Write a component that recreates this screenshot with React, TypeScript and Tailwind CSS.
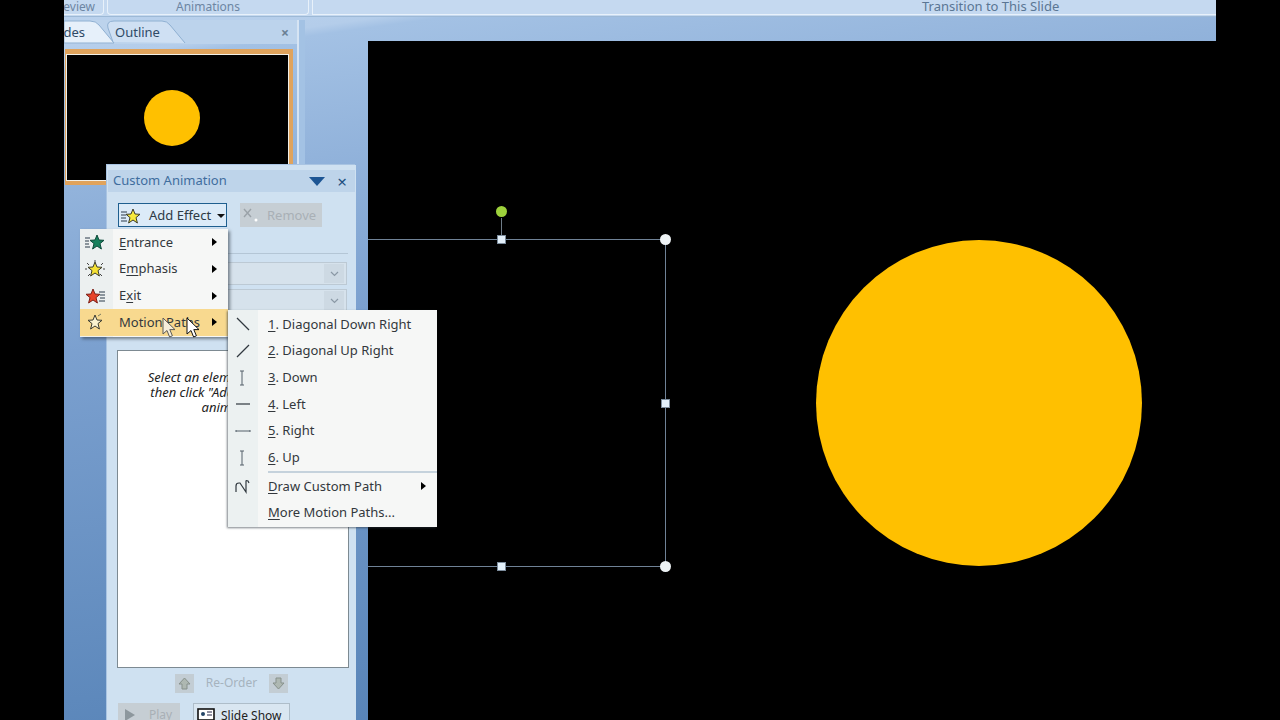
import type { ReactNode } from "react";

const starPoints = "8,1 10,6 15,6.3 11,9.6 12.4,15 8,12 3.6,15 5,9.6 1,6.3 6,6";

function Star({ fill, stroke = "#3a3a2a" }: { fill: string; stroke?: string }) {
  return <polygon points={starPoints} fill={fill} stroke={stroke} strokeWidth="1" strokeLinejoin="round" />;
}

function AddEffectIcon() {
  return (
    <svg width="22" height="18" viewBox="0 0 22 18">
      <path d="M1 5h6M1 8h5M1 11h5M1 14h6" stroke="#2b3b4b" strokeWidth="1.2" />
      <g transform="translate(5 1)">
        <Star fill="#f7ea3c" />
      </g>
    </svg>
  );
}

function EntranceIcon() {
  return (
    <svg width="22" height="18" viewBox="0 0 22 18">
      <path d="M1 5h5M1 8h4M1 11h4M1 14h5" stroke="#2b3b4b" strokeWidth="1.2" />
      <g transform="translate(5 1)">
        <Star fill="#16805c" stroke="#0d4a3a" />
      </g>
    </svg>
  );
}

function EmphasisIcon() {
  return (
    <svg width="22" height="18" viewBox="0 0 22 18">
      <path d="M11 0v2M3 3l2 2M19 3l-2 2M1 9h2M21 9h-2M4 16l2-2M18 16l-2-2" stroke="#444" strokeWidth="1" />
      <g transform="translate(3 1)">
        <Star fill="#f5e133" />
      </g>
    </svg>
  );
}

function ExitIcon() {
  return (
    <svg width="22" height="18" viewBox="0 0 22 18">
      <path d="M15 5h6M16 8h5M16 11h5M15 14h6" stroke="#2b3b4b" strokeWidth="1.2" />
      <g transform="translate(1 1)">
        <Star fill="#e8442a" stroke="#7a2018" />
      </g>
    </svg>
  );
}

function MotionIcon() {
  return (
    <svg width="22" height="18" viewBox="0 0 22 18">
      <path d="M14 3l3-2" stroke="#7a7a60" strokeWidth="1" />
      <g transform="translate(3 1)">
        <Star fill="#fbf3d0" stroke="#3b3b30" />
      </g>
    </svg>
  );
}

function PathIcon({ d, dots }: { d: string; dots?: boolean }) {
  return (
    <svg width="22" height="22" viewBox="0 0 22 22">
      <path d={d} fill="none" stroke={dots ? "#55606a" : "#30383f"} strokeWidth={dots ? 1 : 1.2} />
    </svg>
  );
}

function Arrow() {
  return <span className="border-y-[4px] border-l-[5px] border-y-transparent border-l-black" />;
}

function Key({ children }: { children: ReactNode }) {
  return <span className="underline underline-offset-2">{children}</span>;
}

function MenuRow({
  icon,
  label,
  arrow,
  active,
  col,
}: {
  icon?: ReactNode;
  label: ReactNode;
  arrow?: boolean;
  active?: boolean;
  col: string;
}) {
  return (
    <div className={`flex h-[26.7px] items-center pr-[11px] ${active ? "bg-[#f8d98f]" : ""}`}>
      <div className={`flex shrink-0 justify-center ${col}`}>{icon}</div>
      <div className="flex-1 whitespace-nowrap text-[13px] text-[#33383d]">{label}</div>
      {arrow && <Arrow />}
    </div>
  );
}

function Cursor({ ghost }: { ghost?: boolean }) {
  return (
    <svg width="14" height="22" viewBox="0 0 14 22">
      <path
        d="M1 1v16l4-3.5 2.6 6.5 2.8-1.2-2.6-6.2H13z"
        fill={ghost ? "#f6eedb" : "#fff"}
        stroke={ghost ? "#5a5a58" : "#111"}
        strokeWidth="1"
      />
    </svg>
  );
}

function Combo() {
  return (
    <div className="flex h-[23px] items-center justify-end border border-[#bcc9d4] bg-[#d6e2ec] pr-[2px]">
      <div className="flex h-[19px] w-[20px] items-center justify-center bg-[#cdd9e3]">
        <svg width="9" height="6" viewBox="0 0 9 6">
          <path d="M1 1l3.5 3.5L8 1" fill="none" stroke="#8a98a5" strokeWidth="1.2" />
        </svg>
      </div>
    </div>
  );
}

function TaskPane() {
  return (
    <div className="absolute left-[43px] top-[165px] flex h-[570px] w-[249px] flex-col bg-[#cfe1f1] shadow-[-1px_-1px_0_#a9c4e2]">
      <div className="mx-[1px] mt-[5px] flex h-[22px] items-center bg-[#bed4ea] pl-[5px] pr-[8px]">
        <span className="flex-1 text-[13px] text-[#3f6d9e]">Custom Animation</span>
        <span className="mr-[12px] border-x-[8px] border-t-[9px] border-x-transparent border-t-[#1d5594]" />
        <span className="text-[17px] leading-none text-[#1f4f80]">×</span>
      </div>
      <div className="mt-[11px] flex gap-[13px] pl-[11px]">
        <div className="flex h-[24px] w-[109px] items-center whitespace-nowrap border border-[#1f5f8f] bg-[#dcebf8] pl-[1px] pt-[1px] text-[13px] text-[#2e3a44]">
          <AddEffectIcon />
          <span className="ml-[7px]">Add Effect</span>
          <span className="ml-[6px] border-x-[4px] border-t-[4px] border-x-transparent border-t-[#111]" />
        </div>
        <div className="flex h-[24px] w-[82px] items-center gap-[7px] whitespace-nowrap bg-[#c6ced4] pl-[2px] pt-[1px] text-[13px] text-[#a9b0b6]">
          <svg width="18" height="18" viewBox="0 0 18 18">
            <path d="M2 2l7 8M9 2l-7 8" stroke="#9aa2a8" strokeWidth="1.4" />
            <circle cx="14" cy="13" r="1.5" fill="#fff" />
          </svg>
          <span>Remove</span>
        </div>
      </div>
      <div className="ml-[11px] mr-[8px] mt-[26px] h-[1px] bg-[#b4c6d6]" />
      <div className="ml-[11px] mr-[9px] mt-[8px] flex flex-col gap-[4px]">
        <Combo />
        <Combo />
      </div>
      <div className="ml-[10px] mr-[7px] mt-[38px] h-[318px] border border-[#7d8a92] bg-white pt-[19px] text-center text-[13px] italic leading-[15px] text-[#222]">
        Select an element of the slide,
        <br />
        then click "Add Effect" to add
        <br />
        animation.
      </div>
      <div className="mt-[5px] flex h-[20px] items-center justify-center gap-[12px] text-[12px] text-[#a6b3be]">
        <div className="flex h-[19px] w-[19px] items-center justify-center bg-[#c3cdd4]">
          <svg width="13" height="13" viewBox="0 0 13 13">
            <path d="M6.5 1L12 7H9v5H4V7H1z" fill="#aeb8b2" stroke="#87918c" />
          </svg>
        </div>
        <span>Re-Order</span>
        <div className="flex h-[19px] w-[19px] items-center justify-center bg-[#c3cdd4]">
          <svg width="13" height="13" viewBox="0 0 13 13">
            <path d="M6.5 12L12 6H9V1H4v5H1z" fill="#aeb8b2" stroke="#87918c" />
          </svg>
        </div>
      </div>
      <div className="mt-[10px] flex gap-[13px] pl-[11px] text-[12px]">
        <div className="flex h-[24px] w-[62px] items-center gap-[14px] bg-[#c6ced4] pl-[7px] text-[#a9b0b6]">
          <span className="border-y-[6px] border-l-[10px] border-y-transparent border-l-[#8d979d]" />
          <span>Play</span>
        </div>
        <div className="flex h-[24px] w-[97px] items-center gap-[6px] whitespace-nowrap border border-[#aebdc9] bg-[#d9e6f1] pl-[3px] pt-[2px] text-[#222]">
          <svg width="18" height="16" viewBox="0 0 18 16">
            <rect x="1" y="1" width="16" height="11" fill="#fff" stroke="#111" strokeWidth="1.6" />
            <path d="M10 4h5M10 7h5" stroke="#224" />
            <circle cx="6" cy="6" r="2" fill="#246" />
          </svg>
          <span>Slide Show</span>
        </div>
      </div>
    </div>
  );
}

function EffectMenu() {
  const col = "w-[30px] mr-[9px]";
  return (
    <div className="absolute left-[16px] top-[229px] w-[148px] bg-[#f6f7f6] bg-[linear-gradient(90deg,#ecf0f0_33px,transparent_33px)] pb-[1px] shadow-[2px_2px_3px_rgba(40,50,60,0.55)]">
      <MenuRow col={col} icon={<EntranceIcon />} label={<><Key>E</Key>ntrance</>} arrow />
      <MenuRow col={col} icon={<EmphasisIcon />} label={<>E<Key>m</Key>phasis</>} arrow />
      <MenuRow col={col} icon={<ExitIcon />} label={<>E<Key>x</Key>it</>} arrow />
      <MenuRow col={col} icon={<MotionIcon />} label="Motion Paths" arrow active />
    </div>
  );
}

function PathsMenu() {
  const col = "w-[30px] mr-[10px]";
  return (
    <div className="absolute left-[164px] top-[310px] w-[209px] bg-[#f6f7f6] bg-[linear-gradient(90deg,#ecf1f1_30px,transparent_30px)] pt-[1px] shadow-[-1px_1px_2px_rgba(40,50,60,0.6)]">
      <MenuRow col={col} icon={<PathIcon d="M5 5l12 12" />} label={<><Key>1</Key>. Diagonal Down Right</>} />
      <MenuRow col={col} icon={<PathIcon d="M5 17L17 5" />} label={<><Key>2</Key>. Diagonal Up Right</>} />
      <MenuRow col={col} icon={<PathIcon dots d="M10 4v14M8 4h4M8 18h4" />} label={<><Key>3</Key>. Down</>} />
      <MenuRow col={col} icon={<PathIcon d="M4 11h14" />} label={<><Key>4</Key>. Left</>} />
      <MenuRow col={col} icon={<PathIcon dots d="M4 11h14M4 10v2M18 10v2" />} label={<><Key>5</Key>. Right</>} />
      <MenuRow col={col} icon={<PathIcon dots d="M10 4v14M8 4h4M8 18h4" />} label={<><Key>6</Key>. Up</>} />
      <div className="ml-[40px] h-[2px] bg-[#c5d2dc]" />
      <MenuRow col={col} icon={<PathIcon d="M4 17V11q0-3 3-3h1l6 9V6q0-1 2 0l1 2" />} label={<><Key>D</Key>raw Custom Path</>} arrow />
      <MenuRow col={col} label={<><Key>M</Key>ore Motion Paths...</>} />
    </div>
  );
}

function Slide() {
  return (
    <div className="relative flex-1 bg-black">
      {/* selection outline of the shape being animated */}
      <div className="absolute left-0 top-[198px] h-[328px] w-[298px] border-y border-r border-[#6f8296]" />
      <div className="absolute left-[133px] top-[177px] h-[22px] w-[1px] bg-[#6f7c88]" />
      <div className="absolute left-[128px] top-[165px] h-[11px] w-[11px] rounded-full bg-[#9ed23c]" />
      <div className="absolute left-[129px] top-[194px] h-[9px] w-[9px] border border-[#7c8c9c] bg-[#e3f0fa]" />
      <div className="absolute left-[292px] top-[193px] h-[11px] w-[11px] rounded-full bg-[#eef3f5]" />
      <div className="absolute left-[293px] top-[358px] h-[9px] w-[9px] border border-[#7c8c9c] bg-[#e3f0fa]" />
      <div className="absolute left-[129px] top-[521px] h-[9px] w-[9px] border border-[#7c8c9c] bg-[#e3f0fa]" />
      <div className="absolute left-[292px] top-[520px] h-[11px] w-[11px] rounded-full bg-[#eef3f5]" />
      <div className="absolute left-[448px] top-[199px] h-[326px] w-[326px] rounded-full bg-[#ffc000]" />
    </div>
  );
}

function SidePanel() {
  return (
    <div className="flex w-[233px] shrink-0 flex-col">
      <div className="relative flex h-[24px] items-center overflow-hidden bg-[#bcd3ec] pt-[1px] text-[13px] text-[#2f4a66]">
        <svg className="absolute left-0 top-0" width="233" height="24" viewBox="0 0 233 24">
          <path d="M0 1h26q6 0 9 4l15 18H0z" fill="#e6f0fa" stroke="#8fb0d2" />
          <path d="M49 22l-5-14q-2-7 6-7h48q5 0 8 4l15 18" fill="#cfe0f3" stroke="#8fb0d2" />
        </svg>
        <span className="relative ml-[-15px] w-[36px] whitespace-nowrap text-right">Slides</span>
        <span className="relative ml-[30px]">Outline</span>
        <span className="absolute right-[8px] text-[14px] font-bold leading-none text-[#6a7f95]">×</span>
      </div>
      <div className="ml-[1px] mr-[4px] mt-[5px] h-[136px] border-b-[4px] border-l border-r-[4px] border-t-[5px] border-[#e0a35c] bg-black">
        <div className="flex h-full items-center justify-center border border-[#f2f0e8]">
          <div className="mr-[11px] h-[56px] w-[56px] rounded-full bg-[#ffc000]" />
        </div>
      </div>
    </div>
  );
}

export default function App() {
  return (
    <div className="flex h-[720px] w-[1280px] overflow-hidden bg-black font-['Noto_Sans',sans-serif]">
      <div className="w-[64px] shrink-0" />
      <div className="relative flex w-[1152px] flex-col bg-[linear-gradient(172deg,#bcd3ee_0,#b4cdea_7%,#a3c1e4_8%,#7ba0cf_40%,#4f7db2_100%)]">
        <div className="flex h-[17px] shrink-0 gap-[3px] border-b border-[#9db9d6] bg-[#c5d9f0] text-[12px] leading-[13px] text-[#6d86a3]">
          <div className="flex h-[15px] w-[40px] justify-end overflow-hidden whitespace-nowrap rounded-br border-b border-r border-[#e8f1fa] pr-[8px]">Review</div>
          <div className="h-[15px] w-[202px] rounded-b border-x border-b border-[#e8f1fa] text-center">Animations</div>
          <div className="h-[15px] flex-1 border-b border-l border-[#e8f1fa] pl-[609px] text-[13px] text-[#5a7694]">Transition to This Slide</div>
        </div>
        <div className="flex min-h-0 flex-1 pt-[3px]">
          <SidePanel />
          <div className="h-[145px] w-[8px] shrink-0 border-l-[2px] border-[#d6e4f3] bg-[#a3c2e4]" />
          <div className="flex flex-1 flex-col pl-[63px] pt-[21px]">
            <Slide />
          </div>
        </div>
        <TaskPane />
        <EffectMenu />
        <PathsMenu />
        <div className="absolute left-[98px] top-[317px]"><Cursor ghost /></div>
        <div className="absolute left-[122px] top-[317px]"><Cursor /></div>
      </div>
    </div>
  );
}
